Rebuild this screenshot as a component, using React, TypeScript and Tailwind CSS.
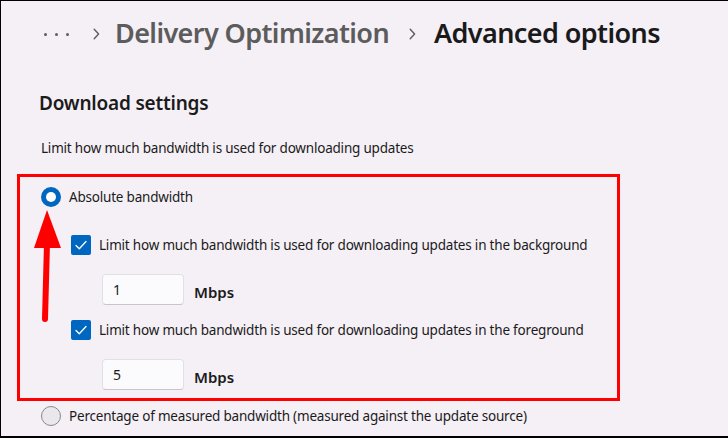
import React from "react";

function Check() {
  return (
    <div className="w-[20px] h-[20px] bg-[#0067c0] rounded-[2px] flex items-center justify-center shrink-0">
      <svg width="14" height="14" viewBox="0 0 14 14" fill="none">
        <path d="M2 7.5 L5.3 10.8 L12 3.5" stroke="white" strokeWidth="1.3" strokeLinecap="round" strokeLinejoin="round" />
      </svg>
    </div>
  );
}

function Input({ v }: { v: string }) {
  return (
    <div className="w-[82px] h-[31px] bg-[#fbfbfd] border border-[#e3e0e5] border-b-[#c8c4cb] rounded-[4px] flex items-center pl-[10px] text-[14px] text-[#1a1a1a]">
      {v}
    </div>
  );
}

function Chevron() {
  return (
    <svg width="7" height="12" viewBox="0 0 7 12" fill="none" className="shrink-0">
      <path d="M1.2 1.2 L5.6 6 L1.2 10.8" stroke="#5d5d5d" strokeWidth="1.4" strokeLinecap="round" strokeLinejoin="round" />
    </svg>
  );
}

export default function App() {
  return (
    <div
      className="relative w-[728px] h-[438px] overflow-hidden bg-[#f5f0f6] border-l border-t border-b-2 border-black text-[#1b1b1b]"
      style={{ fontFamily: '"Noto Sans", "Open Sans", sans-serif' }}
    >
      {/* breadcrumb */}
      <div className="flex items-center h-[40px] mt-[12px] pl-[43px]">
        <div className="flex items-center gap-[8px] mt-[2px]">
          <div className="w-[3px] h-[3px] rounded-full bg-[#5d5d5d]" />
          <div className="w-[3px] h-[3px] rounded-full bg-[#5d5d5d]" />
          <div className="w-[3px] h-[3px] rounded-full bg-[#5d5d5d]" />
        </div>
        <div className="ml-[24px] mt-[2px]"><Chevron /></div>
        <span className="ml-[15px] text-[#5c5c5c] text-[27px] font-semibold tracking-[-0.6px]">Delivery Optimization</span>
        <div className="ml-[20px] mt-[2px]"><Chevron /></div>
        <span className="ml-[18px] text-[#1a1a1a] text-[27px] font-semibold tracking-[-0.6px]">Advanced options</span>
      </div>

      <div className="pl-[38px] mt-[38px] text-[19px] font-semibold leading-[24px] tracking-[-0.2px]">Download settings</div>
      <div className="pl-[40px] mt-[24px] text-[13.5px] leading-[18px] tracking-[-0.2px]">
        Limit how much bandwidth is used for downloading updates
      </div>

      {/* red box */}
      <div className="ml-[16px] mt-[17px] w-[603px] h-[227px] border-[3px] border-[#ff0000] pl-[21px] pt-[10px] text-[13.5px] tracking-[-0.2px]">
        <div className="flex items-center h-[20px]">
          <div className="w-[20px] h-[20px] rounded-full bg-[#0067c0] flex items-center justify-center">
            <div className="w-[10px] h-[10px] rounded-full bg-white" />
          </div>
          <span className="ml-[8px]">Absolute bandwidth</span>
        </div>
        <div className="pl-[30px] mt-[28px] flex items-center h-[20px]">
          <Check />
          <span className="ml-[8px]">Limit how much bandwidth is used for downloading updates in the background</span>
        </div>
        <div className="pl-[61px] mt-[19px] flex items-center h-[31px]">
          <Input v="1" />
          <span className="ml-[10px] text-[15px] font-semibold tracking-normal mt-[6px]">Mbps</span>
        </div>
        <div className="pl-[30px] mt-[15px] flex items-center h-[20px]">
          <Check />
          <span className="ml-[8px]">Limit how much bandwidth is used for downloading updates in the foreground</span>
        </div>
        <div className="pl-[61px] mt-[19px] flex items-center h-[31px]">
          <Input v="5" />
          <span className="ml-[10px] text-[15px] font-semibold tracking-normal mt-[6px]">Mbps</span>
        </div>
      </div>

      <div className="pl-[40px] mt-[5px] flex items-center h-[20px] text-[13.5px] tracking-[-0.2px]">
        <div className="w-[20px] h-[20px] rounded-full border border-[#8a878c] bg-[#ebe8ed]" />
        <span className="ml-[8px]">Percentage of measured bandwidth (measured against the update source)</span>
      </div>

      {/* arrow overlay */}
      <svg className="absolute left-[28px] top-[200px]" width="40" height="130" viewBox="0 0 40 130">
        <path d="M16 118 L18 42" stroke="#ff0000" strokeWidth="6" strokeLinecap="round" />
        <path d="M18 9 L32 47 L5 47 Z" fill="#ff0000" />
      </svg>
    </div>
  );
}
